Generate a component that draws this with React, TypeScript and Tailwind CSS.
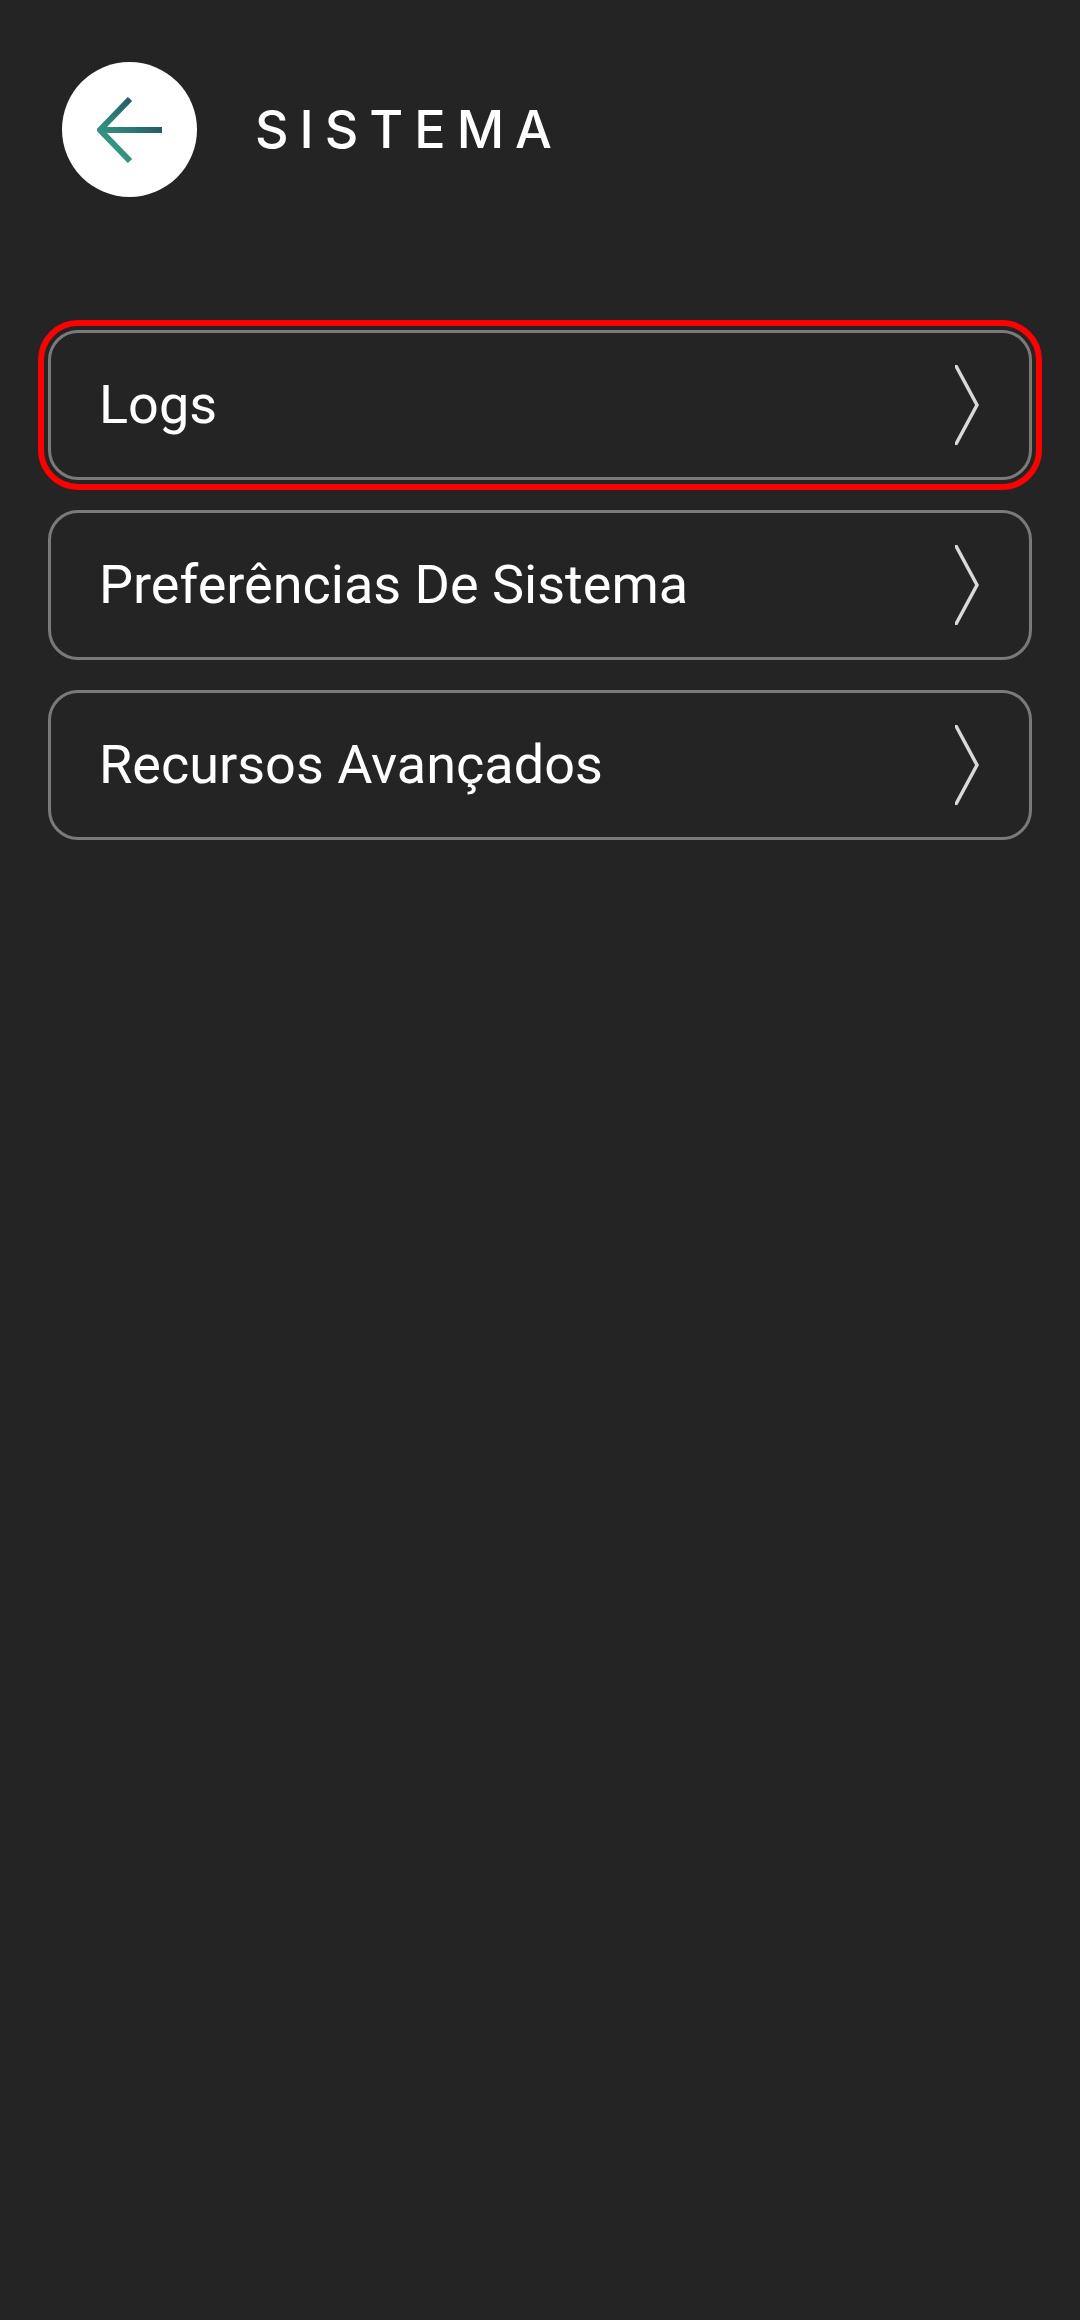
import React from 'react';

const items = [
  { label: 'Logs', selected: true },
  { label: 'Preferências De Sistema', selected: false },
  { label: 'Recursos Avançados', selected: false },
];

const BackIcon = () => (
  <svg width="66" height="66" viewBox="0 0 66 66" fill="none">
    <defs>
      <linearGradient id="backArrow" x1="0" y1="66" x2="66" y2="0" gradientUnits="userSpaceOnUse">
        <stop offset="0" stopColor="#3cb08f" />
        <stop offset="1" stopColor="#1d4058" />
      </linearGradient>
    </defs>
    <path d="M33 2 L3 33 L33 64 M3 33 H65" stroke="url(#backArrow)" strokeWidth="6" />
  </svg>
);

const Chevron = () => (
  <svg width="24" height="80" viewBox="0 0 24 80" fill="none" className="shrink-0">
    <path d="M1 1 L22 40 L1 79" stroke="#d9d9d9" strokeWidth="3.5" strokeLinecap="round" strokeLinejoin="miter" />
  </svg>
);

const App: React.FC = () => {
  return (
    <div className="w-[1080px] h-[2320px] bg-[#242424] font-['Roboto',sans-serif] text-white">
      {/* Header */}
      <div className="flex items-center pl-[62px] pt-[62px]">
        <button className="w-[135px] h-[135px] rounded-full bg-white flex items-center justify-center">
          <BackIcon />
        </button>
        <h1 className="ml-[58px] text-[52px] leading-none font-medium tracking-[11px] font-['Inter',sans-serif]">SISTEMA</h1>
      </div>

      {/* Menu */}
      <div className="flex flex-col gap-[30px] mt-[133px] px-[48px]">
        {items.map(item => (
          <div
            key={item.label}
            className={`h-[150px] rounded-[30px] border-[3px] border-[#7a7a7a] flex items-center justify-between pl-[48px] pr-[50px] ${
              item.selected ? 'outline-[6px] outline-offset-4 outline-[#ff0000]' : ''
            }`}
          >
            <span className="text-[54px] leading-none">{item.label}</span>
            <Chevron />
          </div>
        ))}
      </div>
    </div>
  );
};

export default App;
